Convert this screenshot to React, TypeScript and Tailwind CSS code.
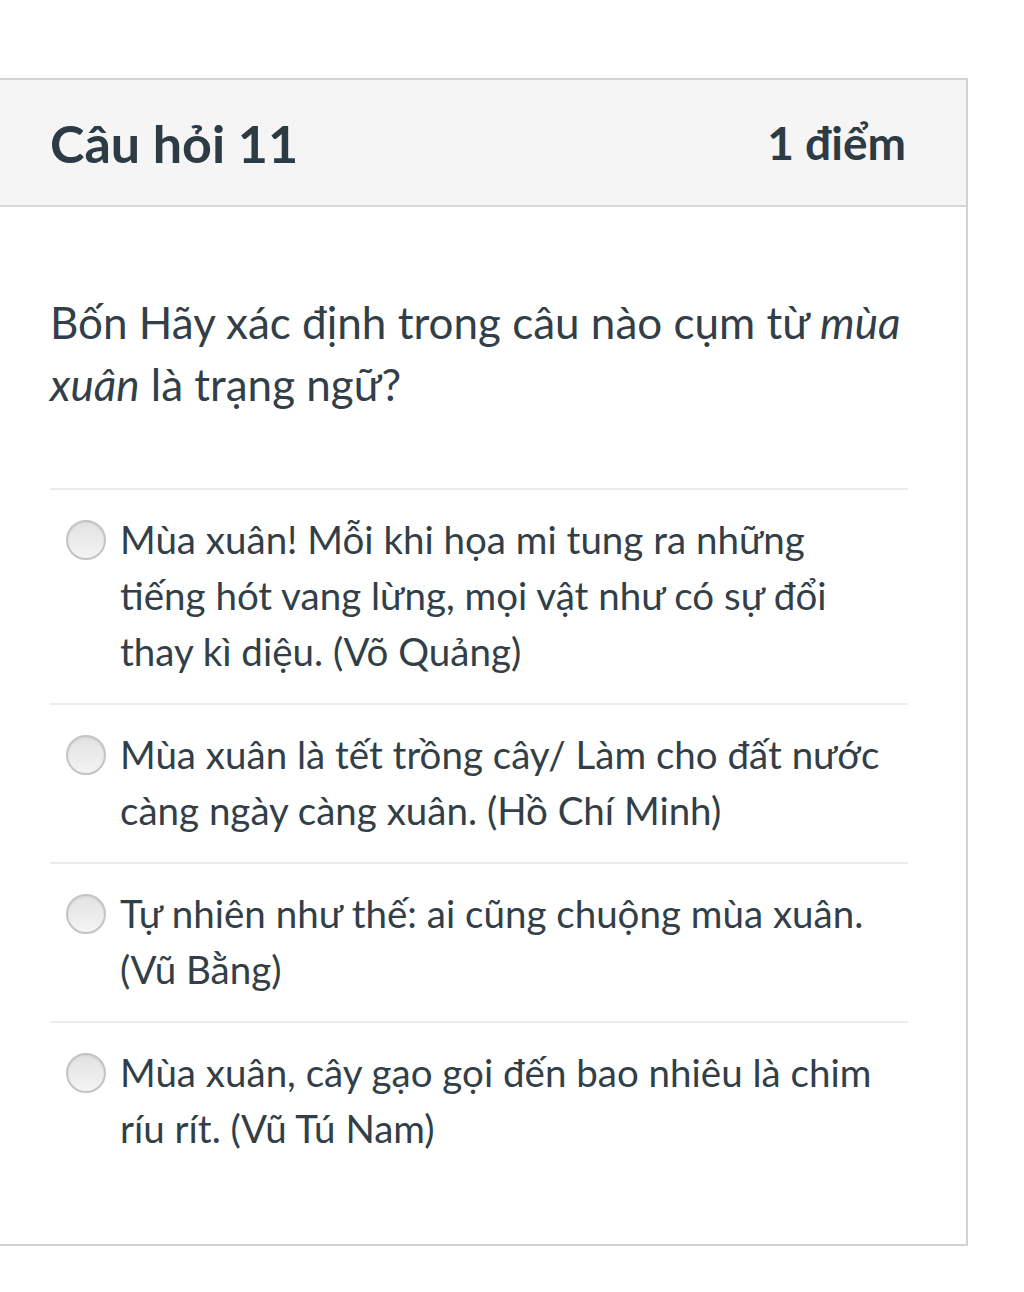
const options = [
  'Mùa xuân! Mỗi khi họa mi tung ra những tiếng hót vang lừng, mọi vật như có sự đổi thay kì diệu. (Võ Quảng)',
  'Mùa xuân là tết trồng cây/ Làm cho đất nước càng ngày càng xuân. (Hồ Chí Minh)',
  'Tự nhiên như thế: ai cũng chuộng mùa xuân. (Vũ Bằng)',
  'Mùa xuân, cây gạo gọi đến bao nhiêu là chim ríu rít. (Vũ Tú Nam)',
];

function Radio() {
  return (
    <span className="mt-[9px] block h-[40px] w-[40px] shrink-0 rounded-full border-2 border-[#c4c4c4] bg-gradient-to-b from-[#e2e2e2] to-[#f4f4f4] shadow-[inset_0_1px_2px_rgba(0,0,0,0.08)]" />
  );
}

export default function App() {
  return (
    <div className="min-h-[1292px] bg-white pt-[78px] text-[#2d3b45]" style={{ fontFamily: 'Lato, "Noto Sans", sans-serif' }}>
      <div className="w-[968px] border-y-2 border-r-2 border-[#cfd3d6]">
        {/* Header */}
        <div className="flex h-[127px] items-center justify-between border-b-2 border-[#d4d8db] bg-[#f5f5f5] pl-[50px] pr-[60px]">
          <h2 className="text-[52px] font-bold leading-none">Câu hỏi 11</h2>
          <span className="text-[46px] font-bold leading-none">1 điểm</span>
        </div>

        {/* Body */}
        <div className="pl-[50px] pr-[58px] pb-[64px] pt-[84px]">
          <p className="mr-[-14px] text-[44px] leading-[62px] text-[#323f48]">
            Bốn Hãy xác định trong câu nào cụm từ <em>mùa xuân</em> là trạng ngữ?
          </p>

          <div className="mt-[73px]">
            {options.map((text, i) => (
              <label key={i} className="flex gap-[14px] border-t-2 border-[#ececec] pb-[24px] pl-[16px] pr-[16px] pt-[21px]">
                <Radio />
                <span className="text-[38.5px] leading-[56px] text-[#323f48]">{text}</span>
              </label>
            ))}
          </div>
        </div>
      </div>
    </div>
  );
}
